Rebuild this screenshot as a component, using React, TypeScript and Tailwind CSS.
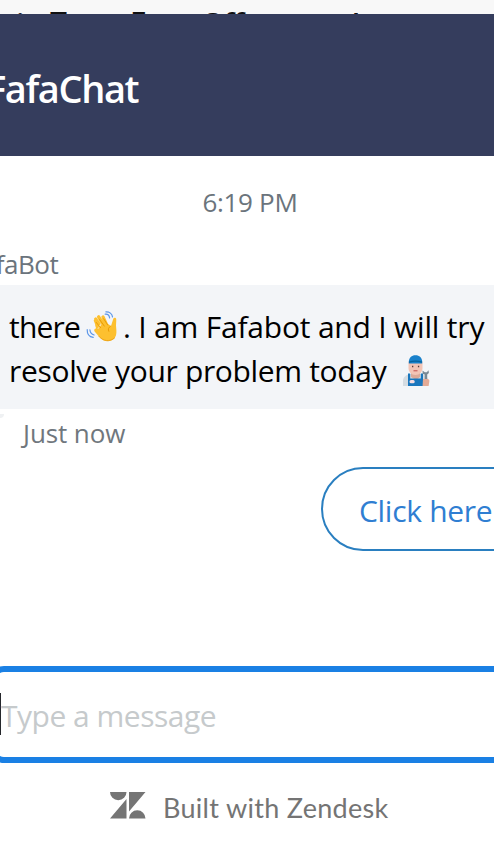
function WavingHand() {
  return (
    <svg viewBox="0 0 32 32" className="w-8 h-8 shrink-0" fill="none" strokeLinecap="round">
      <path
        d="M11.5 15.5c-1-2.3-.9-4.3-2.1-5.8M13 13 9.7 8.1M16.5 12 12.6 5.8M20 12.5l-3-6.6"
        stroke="#fdc02f"
        strokeWidth="3.3"
      />
      <path d="M9.3 13.2 12 18l6-8 7 5 2.4-7.5c.4-1.1 2.6-1 2.8.5.3 2.7-.5 5.8 0 9 .5 4.5.4 8.2-2.2 10.7-3.7 3.6-10 3.1-13.5-.4L8.8 20.7c-1.2-1.4-.5-3.2 1.2-3.3Z" fill="#fdc02f" />
      <path d="m10.2 11.4 4.4 5.3M13.7 8.7l4.6 6.4M17.7 7.8l4 6.2M24.4 15.3c-2.1 1.2-2.6 3-1.6 5" stroke="#e59600" strokeWidth=".9" />
      <path d="M12.8 25.2c4.3 5.2 11.2 6 15.7 1.8" stroke="#eda51c" />
      <path d="M19.2 3.2c2.2-.3 4 1.2 4.4 3.6M19.9.8c3.5-.2 6.2 2 6.6 5M3.9 18.8c.2 2.5 1.8 4.5 4.2 5.2M1.2 18.7c-.1 4 2.3 7.1 6 7.7" stroke="#5c96e8" strokeWidth="1.2" />
    </svg>
  )
}

function Mechanic() {
  return (
    <svg viewBox="0 0 28 32" className="w-7 h-8 shrink-0" fill="none">
      <path d="M1 31v-5c0-4 3-6 7-7h11c4 1 7 3 7 6v6Z" fill="#d5dce2" />
      <path d="M9 17h9v5l-4 3-5-3Z" fill="#dba998" />
      <path d="M6.5 7h14v6c0 4-3 7-7 7s-7-3-7-7Z" fill="#f3c4b5" />
      <path d="M6.8 7c0-4 2.8-6.7 6.7-6.7S20.2 3 20.2 7v1.5H6.8Z" fill="#1981cb" />
      <path d="M7 7.2c4-1.3 9-1.3 13 0" stroke="#09649d" strokeWidth="1.4" />
      <path d="M10 11.5h1.3m4.6 0h1.3" stroke="#5b3c38" strokeWidth="1.4" />
      <path d="M11.5 15.8h4" stroke="#c04e4b" />
      <path d="M6 18.5h2.2v5h10.6v-5H21V31H6Z" fill="#1976bd" />
      <rect x="7.5" y="25" width="5.2" height="3.2" rx="1.5" fill="#f3dce2" />
      <path d="m20.5 15.5.2 3.4 2 .7v10.8h2.5V19.6l1.7-1.5-.4-2.8-1.7 2-2-.1Z" fill="#788995" />
      <path d="M21 24h4.5c1.5 0 2 1 1.8 2.5L26.6 31h-6Z" fill="#e3aa96" />
    </svg>
  )
}

function ZendeskLogo() {
  return (
    <svg viewBox="0 0 36 28" className="w-9 h-7 shrink-0" fill="#757575">
      <path d="M0 0h16.5a8.25 8.25 0 0 1-16.5 0ZM16.5 7v19.5H0ZM19 0h16.5L19 19.5ZM19 26.5a8.25 8.25 0 0 1 16.5 0Z" />
    </svg>
  )
}

export default function App() {
  return (
    <main className="h-[850px] w-[494px] overflow-hidden bg-white font-['Open_Sans','Noto_Sans',sans-serif] whitespace-nowrap">
      {/* page heading, mostly hidden behind the chat window */}
      <div className="flex h-[14px] overflow-hidden bg-[#f8f8f8] text-[30px] leading-[40px] font-semibold text-[#111]">
        <span className="mt-[5px] w-[50px] shrink-0 pl-[16px]">is</span>
        <span className="mt-[3px] w-[80px] shrink-0">Term</span>
        <span className="mt-[3px] w-[71px] shrink-0">For</span>
        <span className="mt-[4px] w-[104px] shrink-0 tracking-[-1px]">Offers</span>
        <span className="mt-[5px]">and</span>
      </div>

      <header className="flex h-[142px] items-center bg-[#353d5d] pt-1.5">
        <h1 className="-ml-[14px] text-[38px] leading-[52px] font-semibold tracking-[-1.4px] text-white">FafaChat</h1>
      </header>

      <section className="flex h-[510px] flex-col">
        <time className="mt-[27px] ml-[6px] h-[38px] self-center text-[26px] leading-[38px] tracking-[-0.3px] text-[#6b747c]">6:19 PM</time>
        <p className="mt-[24px] -ml-[31px] h-[38px] text-[26px] leading-[38px] tracking-[-0.5px] text-[#6b747c]">FafaBot</p>

        <div className="mt-[2px] h-[124px] bg-[#f3f5f8] pt-[20px] pl-[9px] text-[30px] leading-[44px] text-black">
          <div className="flex items-center">
            <span className="w-[71px] tracking-[-0.8px]">there</span>
            <span className="ml-[6px]"><WavingHand /></span>
            <span className="ml-[5px] tracking-[-0.2px]">. I am Fafabot and I will try</span>
          </div>
          <div className="flex items-center">
            <span className="w-[377px] tracking-[-0.33px]">resolve your problem today</span>
            <span className="ml-[16px]"><Mechanic /></span>
          </div>
        </div>

        <div className="flex h-[50px] items-start">
          <span className="mt-[5px] size-1 rounded-br-full bg-[#eff1f3]" />
          <p className="mt-[5px] ml-[19px] text-[26px] leading-[38px] tracking-[-0.1px] text-[#70777d]">Just now</p>
        </div>

        <button className="mt-[8px] -mr-10 flex h-[84px] w-[213px] shrink-0 items-center self-end rounded-full border-2 border-[#2a7fc0] pt-0.5 pl-[36px] text-[30px] tracking-[-0.3px] text-[#2f7ed2]">
          Click here
        </button>
      </section>

      <div className="-ml-[10px] flex h-[97px] w-[540px] items-center rounded-[14px] border-[6px] border-[#1a80e4] pl-[4px]">
        <span className="-mt-0.5 h-[42px] w-px bg-[#25272b]" />
        <span className="pt-0.5 text-[30px] leading-[44px] tracking-[-0.5px] text-[#c6cacc]">Type a message</span>
      </div>

      <footer className="flex h-[85px] items-center pl-[110px] font-['Lato',sans-serif] text-[27px] text-[#747474]">
        <ZendeskLogo />
        <span className="ml-[17px] pt-1.5 tracking-[0.3px]">Built with Zendesk</span>
      </footer>
    </main>
  )
}
